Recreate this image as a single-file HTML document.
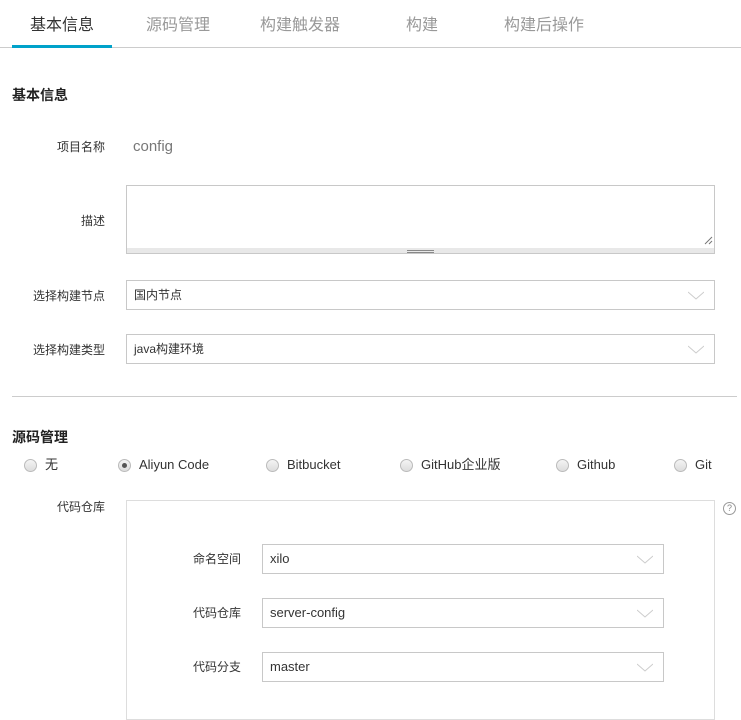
<!DOCTYPE html>
<html><head><meta charset="utf-8"><style>
*{box-sizing:border-box;margin:0;padding:0}
body{width:741px;height:704px;overflow:hidden;background:#fff;font-family:"Liberation Sans","Noto Sans CJK SC",sans-serif;color:#333;position:relative}
.a{position:absolute;white-space:nowrap;line-height:16px}
.tab{font-size:16px;color:#999;top:17px;text-align:center;width:120px;line-height:18px}
.lbl{font-size:12px;color:#333;text-align:right}
.sel{position:absolute;border:1px solid #c8c8c8;background:#fff;font-size:12px;color:#333;padding-left:7px;display:flex;align-items:center;line-height:16px}
.sel svg{position:absolute;right:10px;top:10px}
.rad{position:absolute;width:13px;height:13px;border-radius:50%;border:1px solid #bbb;background:linear-gradient(#f4f4f4,#ddd)}
.rl{font-size:13px;color:#333}
</style></head><body>
<div class="a tab" style="left:2px;color:#333">基本信息</div>
<div class="a tab" style="left:118px">源码管理</div>
<div class="a tab" style="left:240px">构建触发器</div>
<div class="a tab" style="left:362px">构建</div>
<div class="a tab" style="left:484px">构建后操作</div>
<div class="a" style="left:0;top:47px;width:741px;height:1px;background:#ccc"></div>
<div class="a" style="left:12px;top:45px;width:100px;height:3px;background:#00a2ca"></div>

<div class="a" style="left:12px;top:87px;font-size:14px;font-weight:bold;color:#222">基本信息</div>
<div class="a lbl" style="left:0;width:105px;top:139px">项目名称</div>
<div class="a" style="left:133px;top:138px;font-size:15px;color:#777;line-height:18px">config</div>
<div class="a lbl" style="left:0;width:105px;top:213px">描述</div>
<div class="a" style="left:126px;top:185px;width:589px;height:69px;border:1px solid #c8c8c8"></div>
<div class="a" style="left:127px;top:248px;width:587px;height:5px;background:#e8e8e8"></div>
<div class="a" style="left:407px;top:250px;width:27px;height:3px;border-top:1px solid #888;border-bottom:1px solid #888"></div>
<svg class="a" style="left:704px;top:236px" width="9" height="9"><path d="M1 8L8 1M5 8L8 5" stroke="#777"/></svg>

<div class="a lbl" style="left:0;width:105px;top:288px">选择构建节点</div>
<div class="sel" style="left:126px;top:280px;width:589px;height:30px">国内节点<svg width="16" height="9"><path d="M0 1L8 8L16 1" fill="none" stroke="#ccc"/></svg></div>
<div class="a lbl" style="left:0;width:105px;top:342px">选择构建类型</div>
<div class="sel" style="left:126px;top:334px;width:589px;height:30px">java构建环境<svg width="16" height="9"><path d="M0 1L8 8L16 1" fill="none" stroke="#ccc"/></svg></div>

<div class="a" style="left:12px;top:396px;width:725px;height:1px;background:#ccc"></div>
<div class="a" style="left:12px;top:429px;font-size:14px;font-weight:bold;color:#222">源码管理</div>

<div class="rad" style="left:24px;top:459px"></div><div class="a rl" style="left:45px;top:457px">无</div>
<div class="rad" style="left:118px;top:459px"><div style="width:5px;height:5px;border-radius:50%;background:#555;margin:3px"></div></div><div class="a rl" style="left:139px;top:457px">Aliyun Code</div>
<div class="rad" style="left:266px;top:459px"></div><div class="a rl" style="left:287px;top:457px">Bitbucket</div>
<div class="rad" style="left:400px;top:459px"></div><div class="a rl" style="left:421px;top:457px">GitHub企业版</div>
<div class="rad" style="left:556px;top:459px"></div><div class="a rl" style="left:577px;top:457px">Github</div>
<div class="rad" style="left:674px;top:459px"></div><div class="a rl" style="left:695px;top:457px">Git</div>

<div class="a lbl" style="left:0;width:105px;top:499px">代码仓库</div>
<div class="a" style="left:126px;top:500px;width:589px;height:220px;border:1px solid #ddd"></div>
<div class="a" style="left:723px;top:502px;width:13px;height:13px;border:1px solid #999;border-radius:50%;font-size:9px;color:#888;text-align:center;line-height:11px">?</div>

<div class="a lbl" style="left:140px;width:101px;top:551px">命名空间</div>
<div class="sel" style="left:262px;top:544px;width:402px;height:30px;font-size:13px">xilo<svg width="16" height="9"><path d="M0 1L8 8L16 1" fill="none" stroke="#ccc"/></svg></div>
<div class="a lbl" style="left:140px;width:101px;top:605px">代码仓库</div>
<div class="sel" style="left:262px;top:598px;width:402px;height:30px;font-size:13px">server-config<svg width="16" height="9"><path d="M0 1L8 8L16 1" fill="none" stroke="#ccc"/></svg></div>
<div class="a lbl" style="left:140px;width:101px;top:659px">代码分支</div>
<div class="sel" style="left:262px;top:652px;width:402px;height:30px;font-size:13px">master<svg width="16" height="9"><path d="M0 1L8 8L16 1" fill="none" stroke="#ccc"/></svg></div>
</body></html>
